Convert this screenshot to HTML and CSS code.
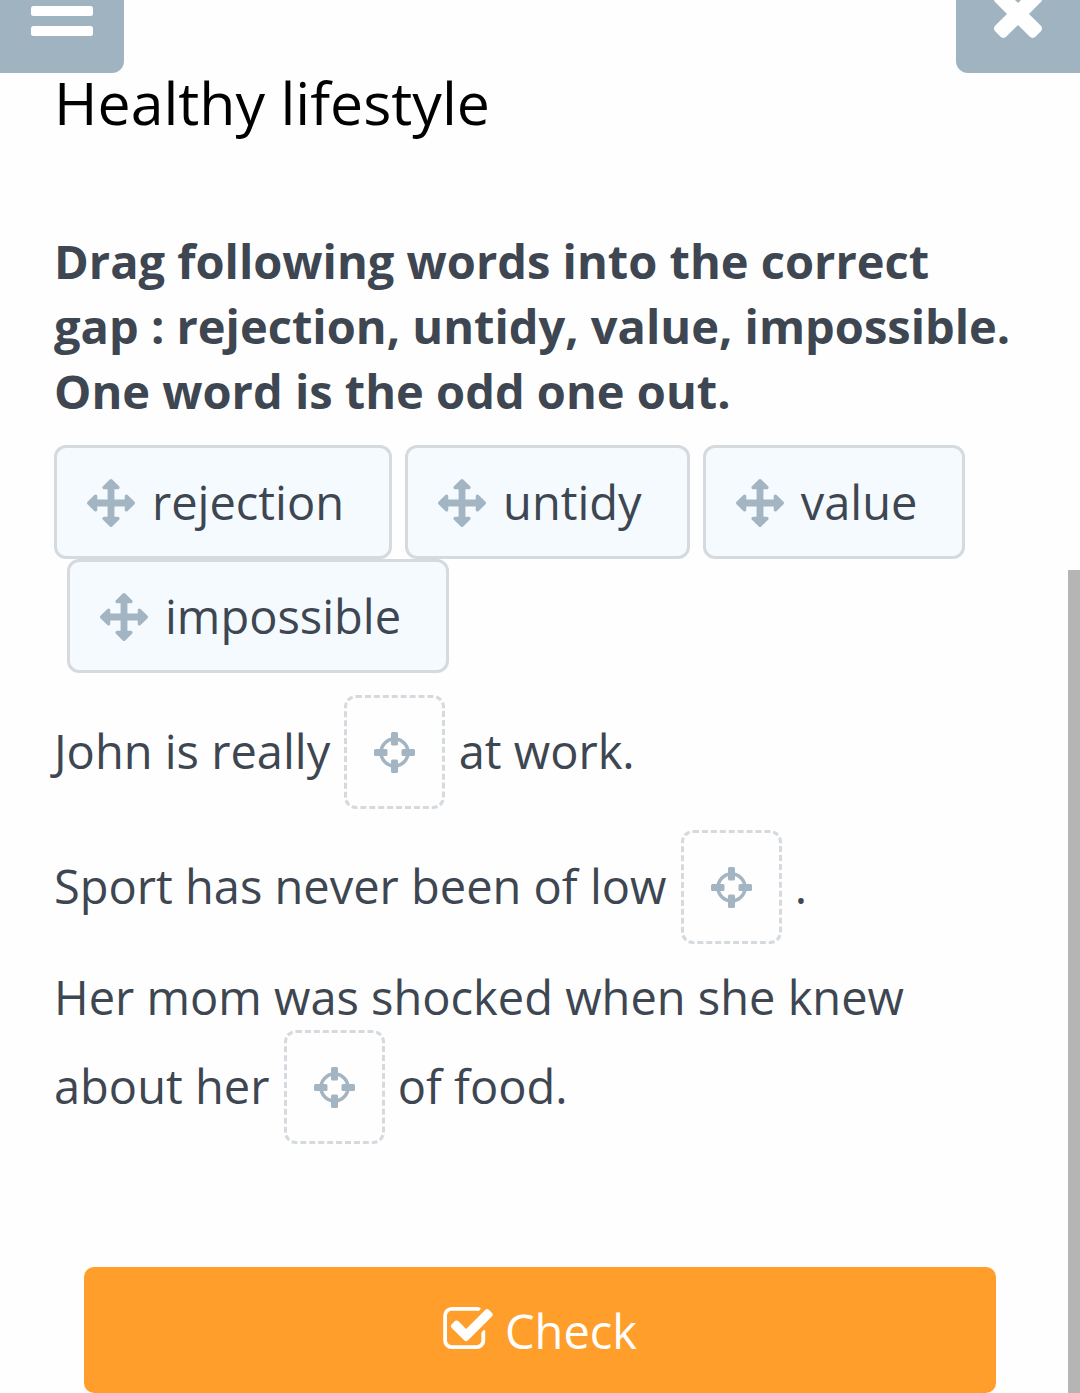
FILE: index.html
```
<!DOCTYPE html>
<html lang="en">
<head>
    <meta charset="UTF-8">
    <meta name="viewport" content="width=device-width, initial-scale=1.0">
    <title>Healthy lifestyle</title>
    <link rel="stylesheet" href="styles.css">
</head>
<body>

    <!-- shared icons -->
    <svg class="sprite" aria-hidden="true">
        <symbol id="icon-move" viewBox="0 0 1792 1792">
            <path d="M1792 896q0 26-19 45l-256 256q-19 19-45 19t-45-19-19-45v-128h-384v384h128q26 0 45 19t19 45-19 45l-256 256q-19 19-45 19t-45-19l-256-256q-19-19-19-45t19-45 45-19h128v-384h-384v128q0 26-19 45t-45 19-45-19l-256-256q-19-19-19-45t19-45l256-256q19-19 45-19t45 19 19 45v128h384v-384h-128q-26 0-45-19t-19-45 19-45l256-256q19-19 45-19t45 19l256 256q19 19 19 45t-19 45-45 19h-128v384h384v-128q0-26 19-45t45-19 45 19l256 256q19 19 19 45z"/>
        </symbol>
        <symbol id="icon-target" viewBox="0 0 41 41">
            <circle cx="20.5" cy="20.5" r="13.5" fill="none" stroke="currentColor" stroke-width="3.5"/>
            <rect x="17" y="0" width="7" height="13.5" rx="1.5"/>
            <rect x="17" y="27.5" width="7" height="13.5" rx="1.5"/>
            <rect x="0" y="17" width="13.5" height="7" rx="1.5"/>
            <rect x="27.5" y="17" width="13.5" height="7" rx="1.5"/>
        </symbol>
    </svg>

    <header class="topbar">
        <button class="btn-corner btn-menu" type="button" aria-label="Menu">
            <svg viewBox="0 0 62 36" width="62" height="36">
                <rect x="0" y="-14" width="62" height="10" rx="2.5"/>
                <rect x="0" y="6" width="62" height="10" rx="2.5"/>
                <rect x="0" y="26" width="62" height="10" rx="2.5"/>
            </svg>
        </button>
        <button class="btn-corner btn-close" type="button" aria-label="Close">
            <svg viewBox="302 614 1188 940" width="48" height="38">
                <path d="M1490 1322q0 40-28 68l-136 136q-28 28-68 28t-68-28l-294-294-294 294q-28 28-68 28t-68-28l-136-136q-28-28-28-68t28-68l294-294-294-294q-28-28-28-68t28-68l136-136q28-28 68-28t68 28l294 294 294-294q28-28 68-28t68 28l136 136q28 28 28 68t-28 68l-294 294 294 294q28 28 28 68z"/>
            </svg>
        </button>
    </header>

    <main class="content">
        <h1>Healthy lifestyle</h1>

        <h2>Drag following words into the correct gap : rejection, untidy, value, impossible. One word is the odd one out.</h2>

        <!-- draggable words -->
        <div class="words">
            <button class="word" type="button" draggable="true"><svg class="icon-move"><use href="#icon-move"/></svg>rejection</button>
            <button class="word" type="button" draggable="true"><svg class="icon-move"><use href="#icon-move"/></svg>untidy</button>
            <button class="word" type="button" draggable="true"><svg class="icon-move"><use href="#icon-move"/></svg>value</button>
            <button class="word word-indent" type="button" draggable="true"><svg class="icon-move"><use href="#icon-move"/></svg>impossible</button>
        </div>

        <!-- sentences with gaps -->
        <p>John is really <button class="gap" type="button" aria-label="Gap 1"><svg class="icon-target"><use href="#icon-target"/></svg></button> at work.</p>
        <p>Sport has never been of low <button class="gap" type="button" aria-label="Gap 2"><svg class="icon-target"><use href="#icon-target"/></svg></button> .</p>
        <p>Her mom was shocked when she knew about her <button class="gap" type="button" aria-label="Gap 3"><svg class="icon-target"><use href="#icon-target"/></svg></button> of food.</p>

        <button class="btn-check" type="button">
            <svg viewBox="64 128 1663 1408" width="50" height="42">
                <path d="M1472 930v318q0 119-84.5 203.5t-203.5 84.5h-832q-119 0-203.5-84.5t-84.5-203.5v-832q0-119 84.5-203.5t203.5-84.5h832q63 0 117 25 15 7 18 23 3 17-9 29l-49 49q-10 10-23 10-3 0-9-2-23-6-45-6h-832q-66 0-113 47t-47 113v832q0 66 47 113t113 47h832q66 0 113-47t47-113v-254q0-13 9-22l64-64q10-10 23-10 6 0 12 3 20 8 20 29zm231-489l-814 814q-24 24-57 24t-57-24l-430-430q-24-24-24-57t24-57l110-110q24-24 57-24t57 24l263 263 647-647q24-24 57-24t57 24l110 110q24 24 24 57t-24 57z"/>
            </svg>
            Check
        </button>
    </main>

    <div class="scroll-thumb"></div>

</body>
</html>
```

FILE: styles.css
```
* { box-sizing: border-box; }
body { margin: 0; background: #fefefe; color: #3d4651; font-family: "Open Sans", "Noto Sans", sans-serif; font-size: 47px; line-height: 65px; }
button { font: inherit; color: inherit; margin: 0; cursor: pointer; }
svg { fill: currentColor; }
.sprite { display: none; }

.topbar { display: flex; justify-content: space-between; }
.btn-corner { display: flex; align-items: flex-start; justify-content: center; width: 124px; height: 73px; padding: 0; border: none; background: #9fb3c1; color: #fff; }
.btn-menu { border-radius: 0 0 12px 0; }
.btn-close { border-radius: 0 0 0 12px; }

.content { padding: 0 60px 0 54px; }
h1 { margin: 0 0 98px; font-size: 59px; font-weight: 400; line-height: 58px; color: #000; }
h2 { margin: 0 0 21px; font-size: 47px; font-weight: 700; }

.words { display: flex; flex-wrap: wrap; column-gap: 13px; margin-bottom: 22px; }
.word { display: flex; align-items: center; gap: 17px; padding: 22px 45px 21px 30px; border: 3px solid #d5dadf; border-radius: 12px; background: #f5faff; cursor: move; }
.word-indent { margin-left: 13px; }
.icon-move { width: 48px; height: 48px; color: #a3b5c2; }

p { margin: 0 0 21px; }
.gap { width: 101px; margin: 0 1px 0 2px; padding: 21px 0 22px; border: 3px dashed #d5dadf; border-radius: 12px; background: transparent; vertical-align: baseline; }
.icon-target { width: 41px; height: 41px; color: #a3b5c2; vertical-align: -4px; }

.btn-check { display: flex; align-items: center; justify-content: center; gap: 12px; width: calc(100% - 54px); margin: 123px 0 0 30px; padding: 32px 0 29px; border: none; border-radius: 10px; background: #ff9e2a; color: #fff; }
.btn-check svg { margin-bottom: 8px; }

/* scroll position marker on the right edge */
.scroll-thumb { position: fixed; right: 0; top: 570px; bottom: 0; width: 12px; background: #b5b5b5; }
```
